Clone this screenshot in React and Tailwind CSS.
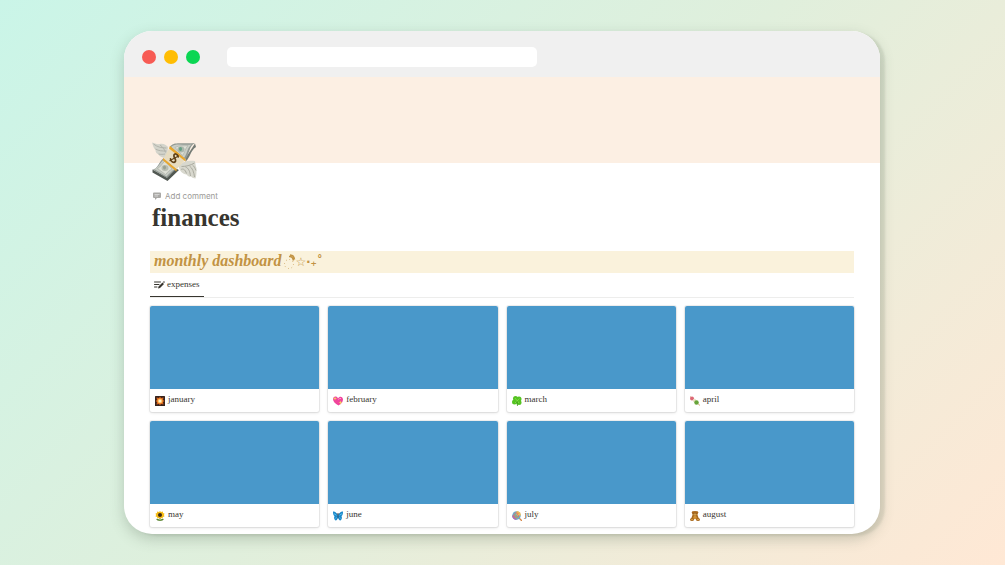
const Money = () => (
  <svg viewBox="0 0 90 84" className="h-[42px] w-[45px]" role="img" aria-label="money with wings">
    <path d="M30 37C22 36 15 33 13 29 8 27 7 23 7 20 3 17 2 11 0 5c6 2 10 4 15 3 7-2 13 1 17 6z" fill="#d3d4cb" />
    <path d="M3 8c8 6 15 8 26 8M7 18c7 4 13 4 22 4M13 28c5 1 8 1 13 0M16 10c6 4 9 9 11 15" stroke="#a9aba2" strokeWidth="1.6" fill="none" />
    <path d="M54 51c7-8 17-11 32-9 1 5 1 9 3 14 0 8 0 15-2 21-4-1-6-1-9-4-4 1-7-1-9-4-8-1-13-7-15-13z" fill="#d8d8ce" />
    <path d="M59 53c8 0 18-2 26-7M58 59c4-2 8-1 11 8M67 54c6 2 9 9 10 18M75 52c6 4 9 13 10 22M81 50c3 2 5 6 7 11" stroke="#a6a69b" strokeWidth="1.8" fill="none" />
    <path d="m1 59 29 16 18-18 6 3-23 22L1 65z" fill="#515852" />
    <path d="M67 36 86 7l2 7c-12 8-11 21-21 29z" fill="#747b75" />
    <path d="M1 59c10 0 13-17 23-23l25 22c-9 5-12 12-19 18z" fill="#929993" />
    <path d="M4 58c9-2 13-15 21-20l21 20c-7 4-11 9-17 15z" fill="#c5cac2" />
    <path d="M35 14c9-13 27-5 51-8-12 6-11 22-20 34z" fill="#929993" />
    <path d="M38 14c9-9 24-3 41-5-9 7-8 18-15 27z" fill="#c9cdc5" />
    <path d="M11 57c7-3 9-10 15-15l14 16c-5 2-8 6-13 11z" fill="#dddfd5" stroke="#a0a59d" />
    <path d="M46 15c8-5 16-2 26-4-6 6-6 14-11 20z" fill="#dddfd5" stroke="#a0a59d" />
    <ellipse cx="26" cy="56" rx="7" ry="6" fill="#b9beb2" />
    <ellipse cx="25" cy="55" rx="3" ry="4" fill="#9aa292" />
    <ellipse cx="58" cy="19" rx="7" ry="6" fill="#aab7ab" />
    <ellipse cx="57" cy="18" rx="3" ry="4" fill="#66a085" />
    <path d="m23 37 13-23 31 25-18 20z" fill="#e7dcc0" />
    <path d="m22 36 27 22v5L22 41zM36 12l31 26v5L34 17z" fill="#e9a72d" />
    <g fill="none" stroke="#604016" strokeWidth="3.4" strokeLinecap="round">
      <path d="M51 31c-4-6-10-4-9 0 1 5 7 5 7 10-1 5-9 5-11-1" transform="rotate(20 44 36)" />
      <path d="m36 41 17-9" strokeWidth="2.4" />
    </g>
  </svg>
);

const CommentIcon = () => (
  <svg viewBox="0 0 16 16" className="size-2" aria-hidden="true">
    <path d="M2 1h12q2 0 2 2v7q0 2-2 2H8l-4 4v-4H2q-2 0-2-2V3q0-2 2-2z" fill="#aaa9a6" />
    <path d="M3 5h10M3 8h7" stroke="#fff" strokeWidth="1" />
  </svg>
);

const EditIcon = () => (
  <svg viewBox="0 0 22 16" className="h-2 w-[11px]" aria-hidden="true">
    <path d="M1 2h12M1 7h9M1 12h5" stroke="#37352f" strokeWidth="2" strokeLinecap="round" />
    <path d="m8 15 1-4 8-8 3 3-8 8zM18 2l1-1q1-1 2 0t0 2l-1 1z" fill="#37352f" />
  </svg>
);

const Swirl = () => (
  <svg viewBox="0 0 24 32" className="h-4 w-3" aria-hidden="true">
    <circle cx="10" cy="20" r="9" fill="none" stroke="#c29343" strokeWidth="1.6" strokeDasharray="1.6 5.4" />
    <path d="M10 5q7-1 9 8M12 2q8 0 9 9" fill="none" stroke="#c29343" strokeWidth="3" />
  </svg>
);

const icons = {
  january: (
    <>
      <rect width="20" height="20" rx="1" fill="#35221d" />
      <path d="m10 1 2 3 5-1-1 5 3 2-3 2 1 5-5-1-2 3-2-3-5 1 1-5-3-2 3-2-1-5 5 1z" fill="#d9641d" />
      <circle cx="10" cy="10" r="5" fill="#ffb14a" />
      <circle cx="10" cy="10" r="3" fill="#fff3c9" />
    </>
  ),
  february: (
    <>
      <path d="M11 19C4 15 0 11 0 6c0-6 8-7 10-1 3-6 10-4 10 2 0 5-4 9-9 12z" fill="#f0449c" />
      <path d="m4 1 1 3 3 1-3 1-1 3-1-3-3-1 3-1zM15 9l1 3 3 1-3 1-1 4-1-4-3-1 3-1z" fill="#f8cf62" />
      <path d="M11 7q2-3 5-2" stroke="#ff9bce" strokeWidth="2" fill="none" />
    </>
  ),
  march: (
    <>
      <g fill="#55c322">
        <circle cx="7" cy="5" r="5" />
        <circle cx="14" cy="6" r="5" />
        <circle cx="5" cy="12" r="5" />
        <circle cx="14" cy="13" r="5" />
        <path d="M5 5h10v9H5z" />
      </g>
      <path d="m6 4 8 10M15 5l-9 9" stroke="#8be04d" strokeWidth="1.5" fill="none" />
      <path d="M10 10q0 5 1 10" stroke="#359013" strokeWidth="1.5" fill="none" />
    </>
  ),
  april: (
    <>
      <path d="m0 1 20 18" stroke="#c99459" strokeWidth="1.6" />
      <circle cx="4" cy="5" r="4" fill="#dd6876" />
      <circle cx="9" cy="9" r="3.5" fill="#e9dfc4" />
      <circle cx="13" cy="13" r="4.5" fill="#67a43a" />
    </>
  ),
  may: (
    <>
      <path d="M10 10v9" stroke="#4c8a2c" strokeWidth="2" />
      <path d="M2 16q5-2 8 3 3-5 8-3-2 4-8 4t-8-4z" fill="#58822c" />
      <path d="m10 0 2 2 4-1v3l3 1-1 3 1 3-3 1-1 3-3-1-2 2-2-2-3 1-1-3-3-1 1-3-1-3 3-1V1l4 1z" fill="#f7bd17" />
      <circle cx="10" cy="8" r="4" fill="#3d2916" />
    </>
  ),
  june: (
    <>
      <path d="M10 9C7 3 3 0 0 1c0 5 1 8 3 9-2 4 0 8 2 9 3 0 4-3 5-6 1 3 2 6 5 6 2-1 4-5 2-9 2-1 3-4 3-9-3-1-7 2-10 8z" fill="#1986c9" />
      <path d="M8 9 2 4q0 4 5 5M12 9l6-5q0 4-5 5M8 11q-4 2-3 6M12 11q4 2 3 6" fill="#66cef5" />
      <path d="M10 7v8M10 8 8 4M10 8l2-4" stroke="#334454" strokeWidth="1.4" />
    </>
  ),
  july: (
    <>
      <path d="m13 13 7 7" stroke="#d7894c" strokeWidth="2.5" />
      <circle cx="9" cy="9" r="8.5" fill="#6aaeca" />
      <path d="M9 0a9 9 0 0 1 9 9H9z" fill="#efbd58" />
      <path d="M9 18a9 9 0 0 1-9-9h9z" fill="#a973b9" />
      <path d="M9 9q2-4 4 0t-5 4-4-6 9-2" stroke="#e9705f" strokeWidth="1.8" fill="none" />
      <path d="M9 9q-2-3-3 1t6 4" stroke="#85c964" strokeWidth="1.5" fill="none" />
    </>
  ),
  august: (
    <>
      <g fill="#a9681c">
        <circle cx="6" cy="3" r="2.5" />
        <circle cx="14" cy="3" r="2.5" />
        <ellipse cx="10" cy="5" rx="5.5" ry="5" />
        <path d="M5 8h10l3 8H2z" />
        <ellipse cx="4" cy="17" rx="4" ry="3" />
        <ellipse cx="16" cy="17" rx="4" ry="3" />
      </g>
      <ellipse cx="10" cy="7" rx="3" ry="2" fill="#e4b65d" />
      <ellipse cx="10" cy="13" rx="3.5" ry="3.5" fill="#cf9135" />
      <circle cx="4" cy="17" r="1.5" fill="#e1b05c" />
      <circle cx="16" cy="17" r="1.5" fill="#e1b05c" />
      <path d="M8 4v1M12 4v1M9.5 7h1" stroke="#3c2411" strokeWidth="1.2" />
    </>
  ),
};

const MonthCard = ({ month }) => (
  <a
    href={`#${month}`}
    className="block overflow-hidden rounded-xs bg-white shadow-[0_0_0_1px_rgba(15,15,15,0.06),0_1px_3px_rgba(15,15,15,0.12)]"
  >
    <div className="h-[83px] bg-[#4998ca]" />
    <div className="flex h-[23px] items-center gap-[3px] px-[5px]">
      <svg viewBox="0 0 20 20" className="size-[10px]" aria-hidden="true">
        {icons[month]}
      </svg>
      <span className="pb-1 text-[9px] leading-3">{month}</span>
    </div>
  </a>
);

const App = () => {
  return (
    <div className="flex min-h-screen items-center bg-linear-135 from-[#caf5e8] via-[#e0efdc] to-[#ffe8d5] pr-[125px] pl-[124px] font-['Liberation_Serif',serif] text-[#37352f]">
      <div className="w-full overflow-hidden rounded-[28px] bg-white shadow-[5px_2px_2px_rgba(90,110,80,0.12),0_5px_14px_rgba(70,90,70,0.26)]">
        <div className="flex h-[46px] items-center bg-[#f0f0f0] pt-[5px] pl-[18px]">
          <div className="flex gap-2">
            <button aria-label="Close" className="size-[14px] rounded-full bg-[#f75b54]" />
            <button aria-label="Minimize" className="size-[14px] rounded-full bg-[#ffbd03]" />
            <button aria-label="Maximize" className="size-[14px] rounded-full bg-[#0bd653]" />
          </div>
          <input
            type="text"
            aria-label="Address"
            className="ml-[27px] h-5 w-[42%] rounded-[5px] bg-white px-2 text-xs outline-none"
          />
        </div>
        <div className="h-[86px] bg-[#fcefe3]" />

        <main className="px-[26px] pb-[7px]">
          <div className="relative -mt-[23px] ml-[2px]">
            <Money />
          </div>
          <button className="mt-2 ml-[3px] flex items-center gap-1 font-['Inter',sans-serif] text-[8px] leading-3 text-[#9b9a97]">
            <CommentIcon />
            Add comment
          </button>
          <h1 className="ml-[2px] text-[25px] leading-8 font-bold">finances</h1>

          <h2 className="mt-[17px] flex h-[22px] items-center gap-[2px] bg-[#faf2dc] px-1 text-base leading-5 font-bold text-[#c29343] italic">
            <span className="pb-[2px]">monthly dashboard</span>
            <span className="flex items-center">
              <Swirl />
              <span className="font-['DejaVu_Sans',sans-serif] text-xs leading-5 font-bold not-italic">☆‧₊˚</span>
            </span>
          </h2>

          <div className="flex border-b border-[#ededec]">
            <button className="flex h-6 items-center gap-[2px] border-b border-[#37352f] px-1 pt-[1px] text-[9px]">
              <EditIcon />
              expenses
            </button>
          </div>

          <div className="mt-2 grid grid-cols-4 gap-[9px]">
            {Object.keys(icons).map((month) => (
              <MonthCard key={month} month={month} />
            ))}
          </div>
        </main>
      </div>
    </div>
  );
};

export default App;
